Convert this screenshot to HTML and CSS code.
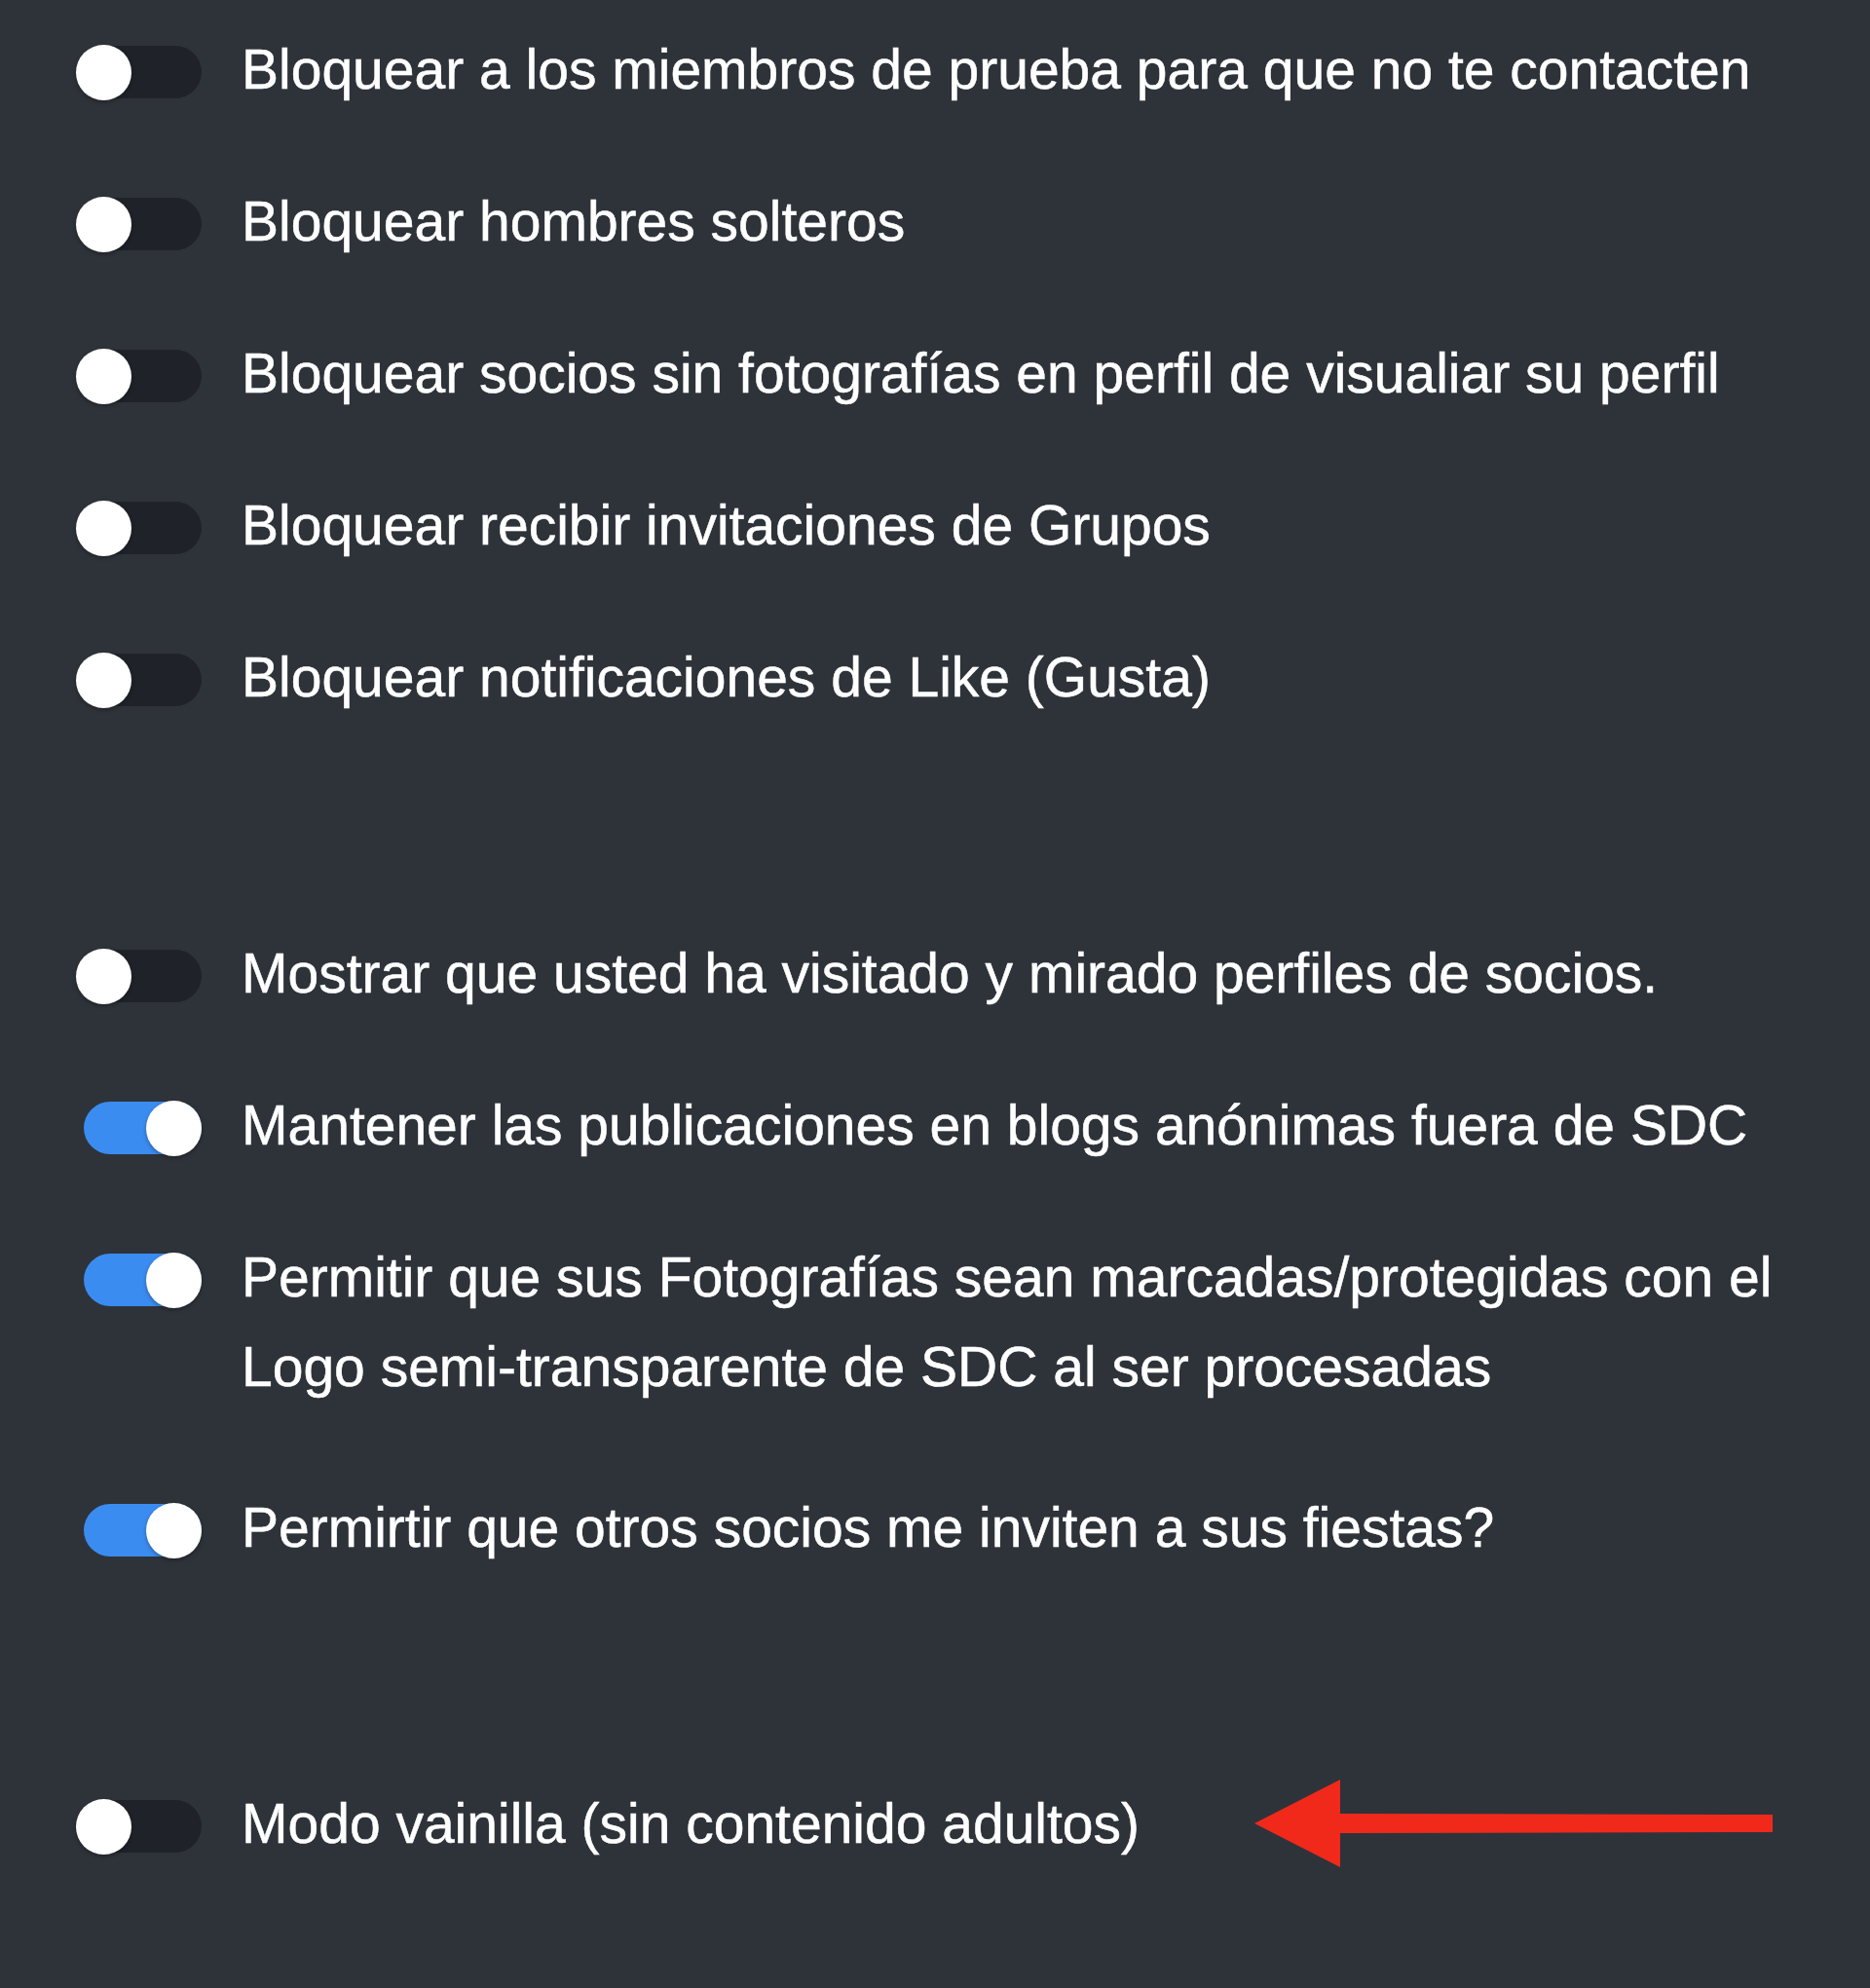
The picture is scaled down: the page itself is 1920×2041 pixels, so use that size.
FILE: index.html
```html
<!DOCTYPE html>
<html lang="es">
<head>
<meta charset="utf-8">
<title>Ajustes de privacidad</title>
<link rel="stylesheet" href="styles.css">
</head>
<body>
<main class="settings">
  <section class="group">
    <div class="row">
      <span class="toggle"><span class="knob"></span></span>
      <span class="label">Bloquear a los miembros de prueba para que no te contacten</span>
    </div>
    <div class="row">
      <span class="toggle"><span class="knob"></span></span>
      <span class="label">Bloquear hombres solteros</span>
    </div>
    <div class="row">
      <span class="toggle"><span class="knob"></span></span>
      <span class="label">Bloquear socios sin fotografías en perfil de visualiar su perfil</span>
    </div>
    <div class="row">
      <span class="toggle"><span class="knob"></span></span>
      <span class="label">Bloquear recibir invitaciones de Grupos</span>
    </div>
    <div class="row">
      <span class="toggle"><span class="knob"></span></span>
      <span class="label">Bloquear notificaciones de Like (Gusta)</span>
    </div>
  </section>

  <section class="group">
    <div class="row">
      <span class="toggle"><span class="knob"></span></span>
      <span class="label">Mostrar que usted ha visitado y mirado perfiles de socios.</span>
    </div>
    <div class="row">
      <span class="toggle is-on"><span class="knob"></span></span>
      <span class="label">Mantener las publicaciones en blogs anónimas fuera de SDC</span>
    </div>
    <div class="row row-tall">
      <span class="toggle is-on"><span class="knob"></span></span>
      <span class="label">Permitir que sus Fotografías sean marcadas/protegidas con el Logo semi-transparente de SDC al ser procesadas</span>
    </div>
    <div class="row">
      <span class="toggle is-on"><span class="knob"></span></span>
      <span class="label">Permirtir que otros socios me inviten a sus fiestas?</span>
    </div>
  </section>

  <section class="group">
    <div class="row">
      <span class="toggle"><span class="knob"></span></span>
      <span class="label">Modo vainilla (sin contenido adultos)</span>
      <svg class="arrow" width="534" height="92" viewBox="0 0 534 92" aria-hidden="true">
        <path d="M0 45 L88 0 L88 35 L532 36 L532 54 L88 55 L88 90 Z" fill="#f0291b"/>
      </svg>
    </div>
  </section>
</main>
</body>
</html>
```

FILE: styles.css
```css
html, body {
  margin: 0;
  padding: 0;
  background: #2e333a;
}

body {
  min-height: 2041px;
  font-family: "Liberation Sans", Arial, Helvetica, sans-serif;
  color: #ffffff;
}

.settings {
  display: flex;
  flex-direction: column;
  gap: 209px;
  padding: 22px 60px 0 78px;
}

.group {
  display: flex;
  flex-direction: column;
  gap: 61px;
}

.row {
  position: relative;
  display: flex;
  align-items: flex-start;
  gap: 41px;
}

.row-tall {
  padding-bottom: 9px;
}

.label {
  padding-top: 3px;
  font-size: 57px;
  line-height: 92px;
  letter-spacing: 0;
  -webkit-text-stroke: 0.5px #ffffff;
}

.toggle {
  position: relative;
  flex: 0 0 auto;
  width: 129px;
  height: 54px;
  margin-top: 25px;
}

.toggle::before {
  content: "";
  position: absolute;
  left: 8px;
  top: 0;
  width: 121px;
  height: 54px;
  border-radius: 27px;
  background: #1f2329;
}

.toggle.is-on::before {
  background: #3b8cf0;
}

.knob {
  position: absolute;
  left: 0;
  top: -1px;
  width: 57px;
  height: 57px;
  border-radius: 50%;
  background: #ffffff;
  box-shadow: 0 2px 4px rgba(0, 0, 0, 0.3);
}

.toggle.is-on .knob {
  left: 72px;
}

.arrow {
  position: absolute;
  left: 1210px;
  top: 4px;
}
```
